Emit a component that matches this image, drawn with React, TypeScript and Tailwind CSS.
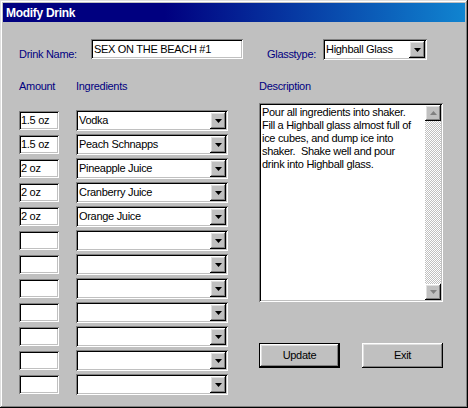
import React from "react";

// classic 3D borders
const sunken =
  "shadow-[inset_1px_1px_0_#808080,inset_-1px_-1px_0_#ffffff,inset_2px_2px_0_#000000,inset_-2px_-2px_0_#c0c0c0]";
const raised =
  "shadow-[inset_-1px_-1px_0_#000000,inset_1px_1px_0_#ffffff,inset_-2px_-2px_0_#808080,inset_2px_2px_0_#dfdfdf]";
const frame =
  "shadow-[inset_-1px_-1px_0_#000000,inset_1px_1px_0_#dfdfdf,inset_-2px_-2px_0_#808080,inset_2px_2px_0_#ffffff]";

const rows: { amount: string; ingredient: string }[] = [
  { amount: "1.5 oz", ingredient: "Vodka" },
  { amount: "1.5 oz", ingredient: "Peach Schnapps" },
  { amount: "2 oz", ingredient: "Pineapple Juice" },
  { amount: "2 oz", ingredient: "Cranberry Juice" },
  { amount: "2 oz", ingredient: "Orange Juice" },
  { amount: "", ingredient: "" },
  { amount: "", ingredient: "" },
  { amount: "", ingredient: "" },
  { amount: "", ingredient: "" },
  { amount: "", ingredient: "" },
  { amount: "", ingredient: "" },
  { amount: "", ingredient: "" },
];

function Arrow({ down = true, color = "#000000" }: { down?: boolean; color?: string }) {
  return (
    <svg width="7" height="4" viewBox="0 0 7 4">
      <path d={down ? "M0 0h7L3.5 4z" : "M0 4h7L3.5 0z"} fill={color} />
    </svg>
  );
}

function DropButton() {
  return (
    <div className={`flex h-full w-[16px] shrink-0 items-center justify-center bg-[#c0c0c0] ${raised}`}>
      <Arrow />
    </div>
  );
}

function Combo({ value, className = "" }: { value: string; className?: string }) {
  return (
    <div className={`flex bg-white p-[2px] ${sunken} ${className}`}>
      <span className="flex-1 truncate pl-[1px] leading-[17px]">{value}</span>
      <DropButton />
    </div>
  );
}

function Label({ children, className = "" }: { children: React.ReactNode; className?: string }) {
  return <div className={`leading-[13px] text-[#000080] ${className}`}>{children}</div>;
}

function Button({ label, isDefault }: { label: string; isDefault?: boolean }) {
  return (
    <div
      className={`flex h-[25px] w-[81px] items-center justify-center bg-[#c0c0c0] ${
        isDefault ? "border border-black" : ""
      } ${raised}`}
    >
      {label}
    </div>
  );
}

export default function App() {
  return (
    <div
      className={`h-[408px] w-[468px] bg-[#c0c0c0] p-[3px] font-['Liberation_Sans',Arial,sans-serif] text-[11px] tracking-[-0.3px] text-black ${frame}`}
    >
      <div className="flex h-[19px] items-center bg-[linear-gradient(to_right,#000080_35%,#1084d0)] pl-[3px] text-[12px] font-bold text-white">
        Modify Drink
      </div>

      <div className="pl-[16px]">
        <div className="mt-[17px] flex h-[20px] items-start">
          <Label className="mt-[9px] w-[72px]">Drink Name:</Label>
          <div className={`h-[20px] w-[152px] bg-white px-[3px] leading-[20px] ${sunken}`}>
            SEX ON THE BEACH #1
          </div>
          <Label className="ml-[24px] mt-[9px] w-[56px]">Glasstype:</Label>
          <Combo value="Highball Glass" className="h-[21px] w-[104px]" />
        </div>

        <div className="mt-[21px] flex">
          <div className="w-[209px]">
            <div className="flex">
              <Label className="w-[57px]">Amount</Label>
              <Label>Ingredients</Label>
            </div>
            <div className="mt-[17px] flex flex-col gap-[3px]">
              {rows.map((r, i) => (
                <div key={i} className="flex h-[21px] items-center">
                  <div className={`h-[19px] w-[40px] bg-white pl-[2px] leading-[19px] ${sunken}`}>
                    {r.amount}
                  </div>
                  <Combo value={r.ingredient} className="ml-[17px] h-[21px] w-[152px]" />
                </div>
              ))}
            </div>
          </div>

          <div className="ml-[31px] w-[184px]">
            <Label>Description</Label>
            <div className={`mt-[10px] flex h-[199px] bg-white p-[2px] ${sunken}`}>
              <div className="flex-1 pl-[1px] pt-[1px] leading-[13px]">
                Pour all ingredients into shaker.
                <br />
                Fill a Highball glass almost full of
                <br />
                ice cubes, and dump ice into
                <br />
                shaker.&nbsp; Shake well and pour
                <br />
                drink into Highball glass.
              </div>
              <div className="flex w-[16px] flex-col">
                <div className={`flex h-[16px] items-center justify-center bg-[#c0c0c0] ${raised}`}>
                  <Arrow down={false} color="#808080" />
                </div>
                <div className="flex-1 bg-[repeating-conic-gradient(#c0c0c0_0_25%,#ffffff_0_50%)] bg-[length:2px_2px]" />
                <div className={`flex h-[16px] items-center justify-center bg-[#c0c0c0] ${raised}`}>
                  <Arrow color="#808080" />
                </div>
              </div>
            </div>
            <div className="mt-[41px] flex justify-between">
              <Button label="Update" isDefault />
              <Button label="Exit" />
            </div>
          </div>
        </div>
      </div>
    </div>
  );
}
